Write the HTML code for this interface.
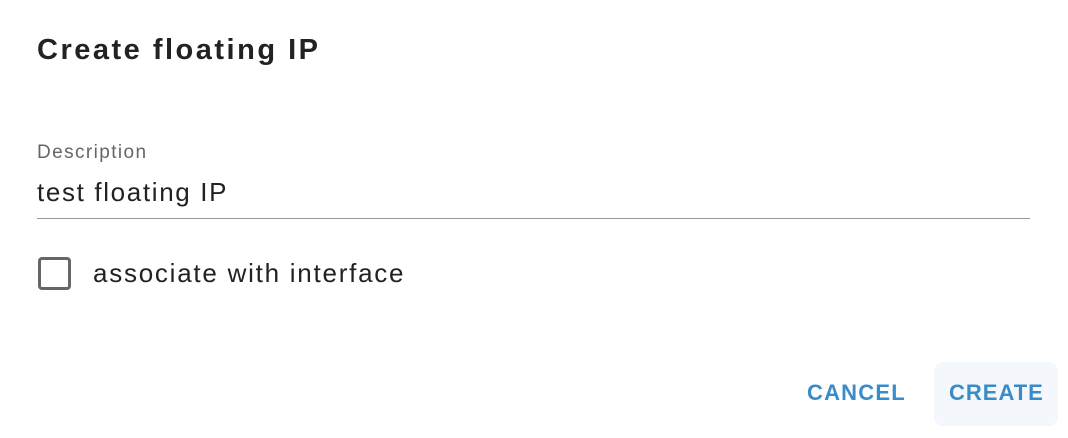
<!DOCTYPE html>
<html><head><style>
body{margin:0;width:1068px;height:438px;background:#fff;font-family:"Liberation Sans",sans-serif;position:relative;overflow:hidden}
div{position:absolute;white-space:nowrap}
</style></head><body>
<div style="left:37px;top:32px;font-size:29px;font-weight:bold;color:#222;line-height:36px;letter-spacing:2.5px">Create floating IP</div>
<div style="left:37px;top:142px;font-size:19px;color:#666;line-height:22px;letter-spacing:1.4px">Description</div>
<div style="left:37px;top:177px;font-size:26px;color:#222;line-height:30px;letter-spacing:1.65px">test floating IP</div>
<div style="left:37px;top:218px;width:993px;height:1px;background:#999"></div>
<div style="left:38px;top:257px;width:27px;height:27px;border:3px solid #666;border-radius:4px"></div>
<div style="left:93px;top:257px;font-size:26px;color:#222;line-height:32px;letter-spacing:1.75px">associate with interface</div>
<div style="left:934px;top:362px;width:124px;height:64px;background:#f4f8fc;border-radius:9px"></div>
<div style="left:807px;top:379px;font-size:22px;font-weight:bold;color:#3a8cc9;line-height:28px;letter-spacing:1.2px">CANCEL</div>
<div style="left:949px;top:379px;font-size:22px;font-weight:bold;color:#3a8cc9;line-height:28px;letter-spacing:1px">CREATE</div>
</body></html>
